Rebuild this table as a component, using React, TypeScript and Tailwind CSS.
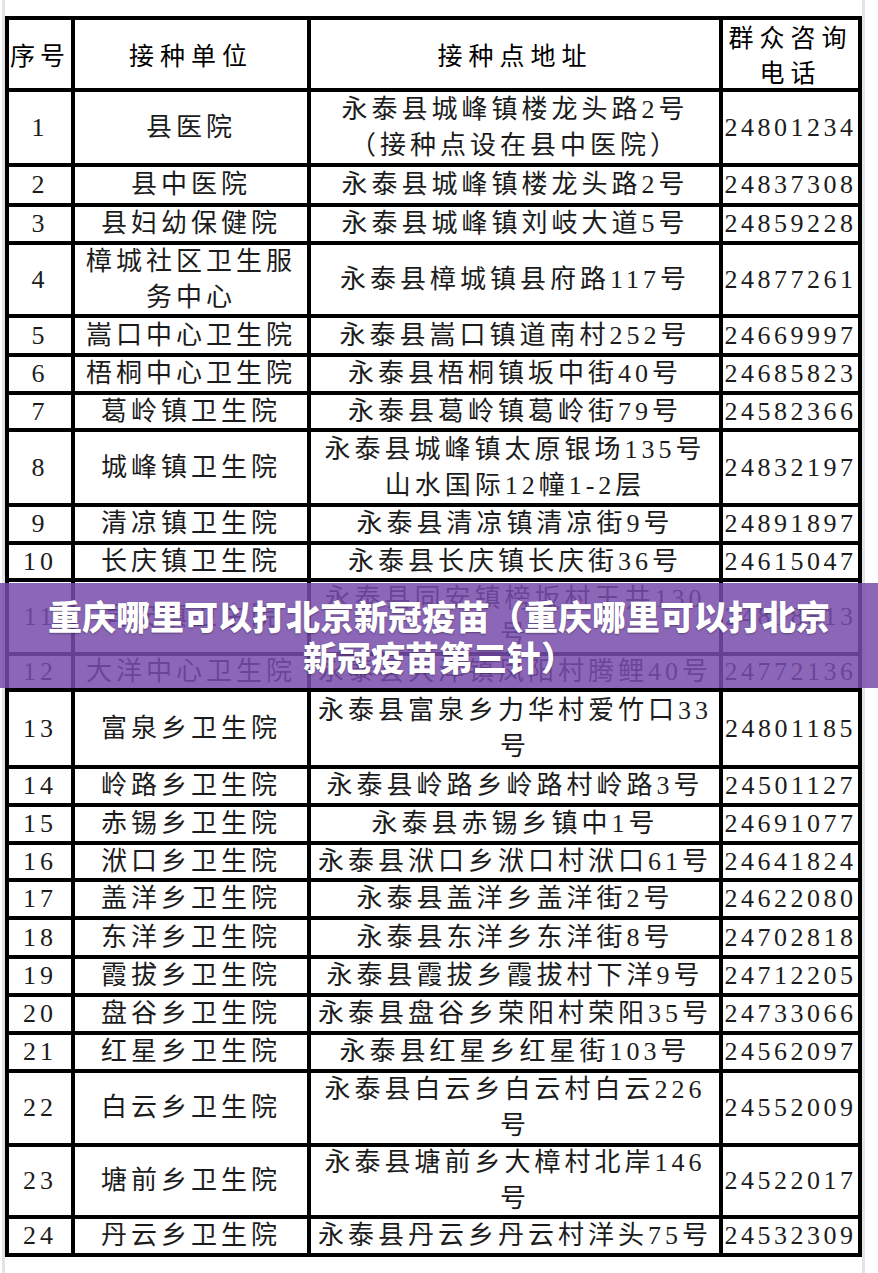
type Row = { no: string; unit: string[]; addr: string[]; tel: string; h: string };

const rows: Row[] = [
  { no: "1", unit: ["县医院"], addr: ["永泰县城峰镇楼龙头路2号", "（接种点设在县中医院）"], tel: "24801234", h: "h-[75px]" },
  { no: "2", unit: ["县中医院"], addr: ["永泰县城峰镇楼龙头路2号"], tel: "24837308", h: "h-[40px]" },
  { no: "3", unit: ["县妇幼保健院"], addr: ["永泰县城峰镇刘岐大道5号"], tel: "24859228", h: "h-[38px]" },
  { no: "4", unit: ["樟城社区卫生服", "务中心"], addr: ["永泰县樟城镇县府路117号"], tel: "24877261", h: "h-[73px]" },
  { no: "5", unit: ["嵩口中心卫生院"], addr: ["永泰县嵩口镇道南村252号"], tel: "24669997", h: "h-[39px]" },
  { no: "6", unit: ["梧桐中心卫生院"], addr: ["永泰县梧桐镇坂中街40号"], tel: "24685823", h: "h-[38px]" },
  { no: "7", unit: ["葛岭镇卫生院"], addr: ["永泰县葛岭镇葛岭街79号"], tel: "24582366", h: "h-[37px]" },
  { no: "8", unit: ["城峰镇卫生院"], addr: ["永泰县城峰镇太原银场135号", "山水国际12幢1-2层"], tel: "24832197", h: "h-[75px]" },
  { no: "9", unit: ["清凉镇卫生院"], addr: ["永泰县清凉镇清凉街9号"], tel: "24891897", h: "h-[38px]" },
  { no: "10", unit: ["长庆镇卫生院"], addr: ["永泰县长庆镇长庆街36号"], tel: "24615047", h: "h-[37px]" },
  { no: "11", unit: ["同安镇卫生院"], addr: ["永泰县同安镇榜坂村王井130", "号"], tel: "24818813", h: "h-[74px]" },
  { no: "12", unit: ["大洋中心卫生院"], addr: ["永泰县大洋镇凤阳村腾鲤40号"], tel: "24772136", h: "h-[36px]" },
  { no: "13", unit: ["富泉乡卫生院"], addr: ["永泰县富泉乡力华村爱竹口33", "号"], tel: "24801185", h: "h-[77px]" },
  { no: "14", unit: ["岭路乡卫生院"], addr: ["永泰县岭路乡岭路村岭路3号"], tel: "24501127", h: "h-[38px]" },
  { no: "15", unit: ["赤锡乡卫生院"], addr: ["永泰县赤锡乡镇中1号"], tel: "24691077", h: "h-[38px]" },
  { no: "16", unit: ["洑口乡卫生院"], addr: ["永泰县洑口乡洑口村洑口61号"], tel: "24641824", h: "h-[37px]" },
  { no: "17", unit: ["盖洋乡卫生院"], addr: ["永泰县盖洋乡盖洋街2号"], tel: "24622080", h: "h-[38px]" },
  { no: "18", unit: ["东洋乡卫生院"], addr: ["永泰县东洋乡东洋街8号"], tel: "24702818", h: "h-[39px]" },
  { no: "19", unit: ["霞拔乡卫生院"], addr: ["永泰县霞拔乡霞拔村下洋9号"], tel: "24712205", h: "h-[38px]" },
  { no: "20", unit: ["盘谷乡卫生院"], addr: ["永泰县盘谷乡荣阳村荣阳35号"], tel: "24733066", h: "h-[38px]" },
  { no: "21", unit: ["红星乡卫生院"], addr: ["永泰县红星乡红星街103号"], tel: "24562097", h: "h-[38px]" },
  { no: "22", unit: ["白云乡卫生院"], addr: ["永泰县白云乡白云村白云226", "号"], tel: "24552009", h: "h-[74px]" },
  { no: "23", unit: ["塘前乡卫生院"], addr: ["永泰县塘前乡大樟村北岸146", "号"], tel: "24522017", h: "h-[72px]" },
  { no: "24", unit: ["丹云乡卫生院"], addr: ["永泰县丹云乡丹云村洋头75号"], tel: "24532309", h: "h-[34px]" },
];

function Lines({ lines }: { lines: string[] }) {
  return (
    <div className="flex flex-col items-center">
      {lines.map((l, i) => (
        <div key={i} className="whitespace-nowrap">
          {l}
        </div>
      ))}
    </div>
  );
}

export default function App() {
  return (
    <div className="relative w-[878px] h-[1273px] bg-white overflow-hidden">
      <div className="ml-[2px] w-[863px] h-full border-x-[3px] border-[#e4e4e4] pt-[16px]">
        <div className="w-[857px] border-4 border-black text-[#1c1c1c] font-['Liberation_Serif','Noto_Sans_CJK_SC',serif] text-[26px] leading-[36px] tracking-[4px]">
          {/* header */}
          <div className="flex h-[72px] border-b-4 border-black font-['Noto_Sans_CJK_SC',sans-serif] text-[25px] text-black tracking-[6px] leading-[35px]">
            <div className="w-[66px] border-r-4 border-black flex items-center justify-center tracking-[5px]">序号</div>
            <div className="w-[236px] border-r-4 border-black flex items-center justify-center">接种单位</div>
            <div className="w-[412px] border-r-4 border-black flex items-center justify-center">接种点地址</div>
            <div className="flex-1 flex items-center justify-center text-center">
              <Lines lines={["群众咨询", "电话"]} />
            </div>
          </div>
          {rows.map((r, i) => (
            <div
              key={r.no}
              className={`flex ${r.h} ${i < rows.length - 1 ? "border-b-4 border-black" : ""}`}
            >
              <div className="w-[66px] border-r-4 border-black flex items-center justify-center">{r.no}</div>
              <div className="w-[236px] border-r-4 border-black flex items-center justify-center">
                <Lines lines={r.unit} />
              </div>
              <div className="w-[412px] border-r-4 border-black flex items-center justify-center">
                <Lines lines={r.addr} />
              </div>
              <div className="flex-1 flex items-center justify-center tracking-[3.5px]">{r.tel}</div>
            </div>
          ))}
        </div>
      </div>

      {/* title banner over the table */}
      <div className="absolute left-0 right-0 top-[583px] h-[105px] bg-[#784cac]/85 flex flex-col items-center justify-center text-white font-['Noto_Sans_CJK_SC',sans-serif] font-black text-[34px] leading-[41px] [text-shadow:0_1px_2px_rgba(0,0,0,0.35)]">
        <div className="whitespace-nowrap">重庆哪里可以打北京新冠疫苗（重庆哪里可以打北京</div>
        <div className="whitespace-nowrap">新冠疫苗第三针）</div>
      </div>
    </div>
  );
}
